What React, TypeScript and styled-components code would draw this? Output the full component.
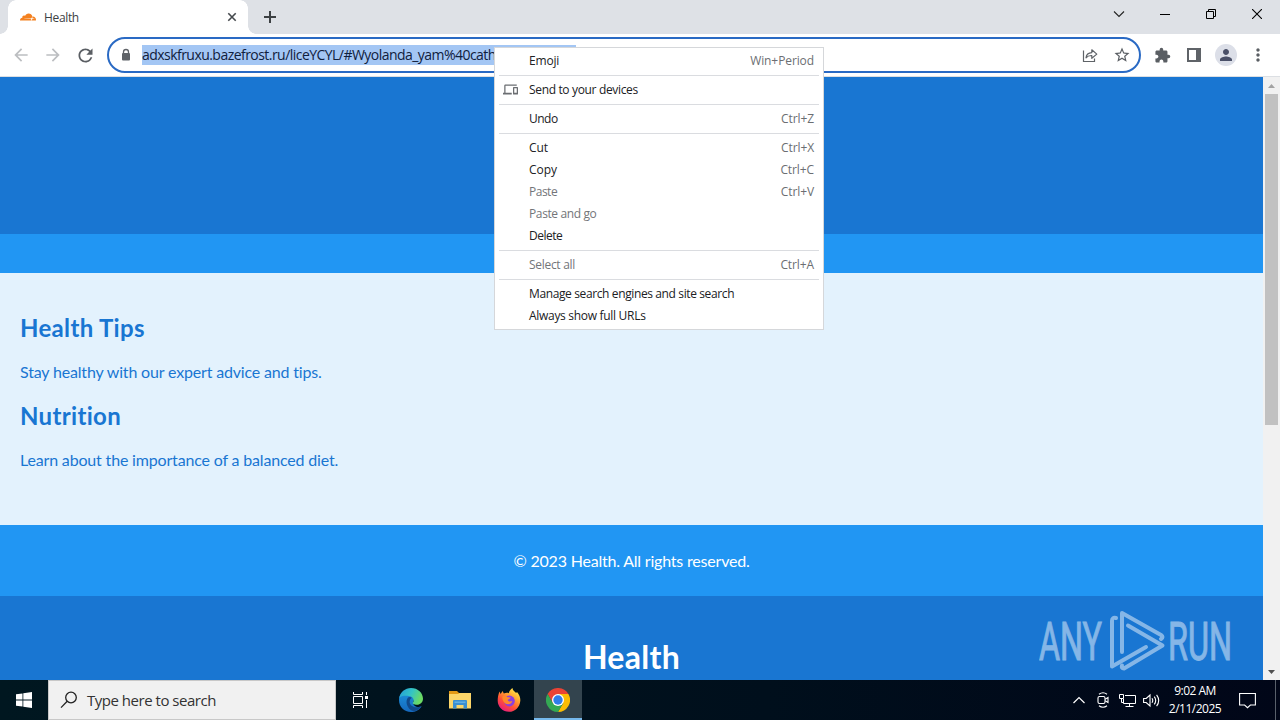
import React from "react";
import styled, { createGlobalStyle, css } from "styled-components";
import {
  MdArrowBack,
  MdArrowForward,
  MdDevices,
  MdExtension,
  MdLock,
  MdMoreVert,
  MdPerson,
  MdRefresh,
  MdStarBorder,
} from "react-icons/md";
import { SiCloudflare } from "react-icons/si";

const GlobalStyle = createGlobalStyle`
  * {
    box-sizing: border-box;
  }

  body {
    margin: 0;
    overflow: hidden;
    font-family: "Open Sans", "Noto Sans", sans-serif;
  }

  svg {
    display: block;
    flex: none;
  }
`;

type MenuEntry = {
  label: string;
  keys?: string;
  disabled?: boolean;
  icon?: React.ReactNode;
  spacing: number;
};

const menuGroups: MenuEntry[][] = [
  [{ label: "Emoji", keys: "Win+Period", spacing: -0.2 }],
  [{ label: "Send to your devices", icon: <MdDevices size={15} />, spacing: -0.34 }],
  [{ label: "Undo", keys: "Ctrl+Z", spacing: -0.5 }],
  [
    { label: "Cut", keys: "Ctrl+X", spacing: -0.1 },
    { label: "Copy", keys: "Ctrl+C", spacing: 0 },
    { label: "Paste", keys: "Ctrl+V", disabled: true, spacing: -0.5 },
    { label: "Paste and go", disabled: true, spacing: -0.38 },
    { label: "Delete", spacing: -0.5 },
  ],
  [{ label: "Select all", keys: "Ctrl+A", disabled: true, spacing: -0.3 }],
  [
    { label: "Manage search engines and site search", spacing: -0.38 },
    { label: "Always show full URLs", spacing: -0.3 },
  ],
];

const ContextMenu = () => (
  <Menu>
    {menuGroups.map((group, i) => (
      <MenuGroup key={i}>
        {group.map((item) => (
          <MenuItem key={item.label} $disabled={item.disabled}>
            <MenuIcon>{item.icon}</MenuIcon>
            <MenuLabel $spacing={item.spacing}>{item.label}</MenuLabel>
            {item.keys && <Shortcut>{item.keys}</Shortcut>}
          </MenuItem>
        ))}
      </MenuGroup>
    ))}
  </Menu>
);

const TabStrip = () => (
  <Strip>
    <Tab>
      <SiCloudflare size={16} color="#f48120" />
      <TabTitle>Health</TabTitle>
      <svg width="16" height="16" viewBox="0 0 16 16" stroke="#45494d" strokeWidth="1.6">
        <path d="M4.3 4.3l7.4 7.4M11.7 4.3l-7.4 7.4" />
      </svg>
    </Tab>
    <NewTab>
      <svg width="14" height="14" viewBox="0 0 14 14" stroke="#3c4043" strokeWidth="2">
        <path d="M7 1v12M1 7h12" />
      </svg>
    </NewTab>
    <WindowButtons>
      <WindowButton>
        <svg width="12" height="12" viewBox="0 0 12 12" fill="none" stroke="#222" strokeWidth="1.1">
          <path d="M1 3.5l5 5 5-5" />
        </svg>
      </WindowButton>
      <WindowButton>
        <svg width="10" height="10" viewBox="0 0 10 10" stroke="#000">
          <path d="M0 5.5h10" />
        </svg>
      </WindowButton>
      <WindowButton>
        <svg width="10" height="10" viewBox="0 0 10 10" fill="none" stroke="#000">
          <path d="M.5 2.5h7v7h-7zM2.5 2.5v-2h7v7h-2" />
        </svg>
      </WindowButton>
      <WindowButton>
        <svg width="10" height="10" viewBox="0 0 10 10" stroke="#000" strokeWidth="1.1">
          <path d="M0 0l10 10M10 0L0 10" />
        </svg>
      </WindowButton>
    </WindowButtons>
  </Strip>
);

const Toolbar = () => (
  <Bar>
    <ToolButton $muted>
      <MdArrowBack size={20} />
    </ToolButton>
    <ToolButton $muted>
      <MdArrowForward size={20} />
    </ToolButton>
    <ToolButton>
      <MdRefresh size={21} />
    </ToolButton>
    <Omnibox>
      <svg width="14" height="14" viewBox="0 0 14 14">
        <path d="M4.500 5.500V4a2.500 2.500 0 0 1 5 0v1.500" fill="none" stroke="#5f6368" strokeWidth="1.300" />
        <rect x="3" y="5" width="8" height="7.500" rx="1" fill="#5f6368" />
      </svg>
      <Selection>
        <Url>adxskfruxu.bazefrost.ru/liceYCYL/#Wyolanda_yam%40cath</Url>
      </Selection>
      <OmniActions>
        <ToolButton>
          <svg width="16" height="16" viewBox="0 0 16 16" fill="none" stroke="#5f6368" strokeWidth="1.2">
            <path d="M1.500 3.500v11h11v-3" />
            <path d="M4 10.800c.4-3.500 2.400-5 5.800-5.200V2.800l5 4.300-5 4.200V8.500C7.200 8.400 5.400 9 4 10.800z" strokeLinejoin="round" />
          </svg>
        </ToolButton>
        <ToolButton>
          <MdStarBorder size={18} />
        </ToolButton>
      </OmniActions>
    </Omnibox>
    <ToolButton>
      <MdExtension size={17} />
    </ToolButton>
    <ToolButton>
      <svg width="14" height="14" viewBox="0 0 14 14">
        <path fill="#5f6368" fillRule="evenodd" d="M0 0h14v14H0zM2 2v10h7V2z" />
      </svg>
    </ToolButton>
    <ToolButton>
      <Avatar>
        <MdPerson size={18} />
      </Avatar>
    </ToolButton>
    <ToolButton>
      <MdMoreVert size={20} />
    </ToolButton>
  </Bar>
);

const Watermark = () => (
  <WatermarkBox>
    <svg width="204" height="64" viewBox="0 0 204 64">
      <g fill="#fff" stroke="#fff" strokeWidth="1" fontFamily="Roboto, sans-serif" fontSize="53">
        <text x="0" y="51" textLength="63" lengthAdjust="spacingAndGlyphs">
          ANY
        </text>
        <text x="129" y="51" textLength="64" lengthAdjust="spacingAndGlyphs">
          RUN
        </text>
      </g>
      <g fill="none" stroke="#fff" strokeWidth="4" strokeLinecap="round" strokeLinejoin="round">
        <path d="M83 43V4L122 26q3 2 0 4" />
        <path d="M77 9q-4-1-4 3v45.500L107 38" />
        <path d="M89 16.500l34.500 20L85 59.500q-3 0-2-3" />
      </g>
    </svg>
  </WatermarkBox>
);

const WebPage = () => (
  <Viewport>
    <Page>
      <Hero />
      <NavBand />
      <Main>
        <h2>Health Tips</h2>
        <p>Stay healthy with our expert advice and tips.</p>
        <h2>Nutrition</h2>
        <p>Learn about the importance of a balanced diet.</p>
      </Main>
      <Footer>© 2023 Health. All rights reserved.</Footer>
      <NextHeader>
        <h1>Health</h1>
      </NextHeader>
      <Watermark />
    </Page>
    <Scrollbar>
      <ScrollArrow>
        <svg width="7" height="4" viewBox="0 0 7 4" fill="#a3a3a3">
          <path d="M0 4L3.500 0 7 4z" />
        </svg>
      </ScrollArrow>
      <Thumb />
      <ScrollArrow $bottom>
        <svg width="7" height="4" viewBox="0 0 7 4" fill="#505050">
          <path d="M0 0l3.500 4L7 0z" />
        </svg>
      </ScrollArrow>
    </Scrollbar>
  </Viewport>
);

const EdgeIcon = () => (
  <svg width="24" height="24" viewBox="0 0 24 24">
    <defs>
      <linearGradient id="edgeTop" x1="0" y1="0" x2="1" y2=".35">
        <stop offset="0" stopColor="#229cda" />
        <stop offset=".55" stopColor="#34c4c5" />
        <stop offset="1" stopColor="#6bdb64" />
      </linearGradient>
      <linearGradient id="edgeLow" x1="0" y1="0" x2="0" y2="1">
        <stop offset="0" stopColor="#1c92dc" />
        <stop offset="1" stopColor="#1568bd" />
      </linearGradient>
    </defs>
    <path fill="url(#edgeLow)" d="M0 12C0 5 5 2 12 4c5 2 4 7 2 10 0 4 4 6 8.500 4.500C20.500 22 16.500 24 12 24 5 24 0 18.600 0 12z" />
    <path fill="url(#edgeTop)" d="M.2 10.200C1.200 4.200 6 0 12 0c7 0 12 5 12 10.800 0 3.600-2.800 6-6 6-3.200 0-5-1.300-3.900-2.600 1.400-1.700.6-5.900-4.300-6.300C5.600 7.600 1.500 7.800.2 10.200z" />
    <path fill="#114a8b" d="M9 9.500c-3 3.500-1.500 11.500 5.500 13.800 3.500-.5 6.500-2.500 8.200-5.100-7 3-13.700-.7-11.700-6.200.4-1.200 1-1.700 1.800-2.300C11.600 8.800 10 8.600 9 9.500z" />
  </svg>
);

const FolderIcon = () => (
  <svg width="22" height="18" viewBox="0 0 22 18">
    <path fill="#e39a16" d="M0 0h8l2 2h12v5H0z" />
    <path fill="#fcd669" d="M0 3h9l1.500-1H22v15.500H0z" />
    <path fill="#3b8fd0" d="M4 17.500V10q0-1 1-1h12q1 0 1 1v7.500h-3.500V14h-7v3.500z" />
    <path fill="#62aee2" d="M5.500 10.500h11V12h-11z" />
  </svg>
);

const FirefoxIcon = () => (
  <svg width="24" height="24" viewBox="0 0 24 24">
    <defs>
      <linearGradient id="fox" x1=".85" y1="0" x2=".2" y2="1">
        <stop offset="0" stopColor="#fff44f" />
        <stop offset=".35" stopColor="#ffa530" />
        <stop offset=".65" stopColor="#ff5036" />
        <stop offset="1" stopColor="#e31587" />
      </linearGradient>
    </defs>
    <path fill="url(#fox)" d="M2.500 3.500L3.600 6l2-3 1.200 2.600c2-1 3.700-.9 5-.4C12.200 3 13.800 1 15.500 0c0 2.500 2 3.300 3.600 5l.9-1c2.500 2.800 3.500 5.600 3.300 8.700C22.900 19 18 23.800 12 23.800 5.800 23.800.7 19 .7 12.800.700 9.500 1.300 6.200 2.500 3.500z" />
    <circle cx="12.400" cy="13" r="5.400" fill="#8a3fe0" />
    <path fill="#ff8a2a" d="M5.500 8.500c2-.8 4-.4 5.200.7l3 .2c-.2 1.600-2.700 1.300-3 2.900 1 1.500 3 1.400 4.600.7-1 3.500-4.800 4-7.300 2.200-2-1.500-3-4.300-2.500-6.700z" />
  </svg>
);

const ChromeIcon = () => (
  <svg width="24" height="24" viewBox="0 0 24 24">
    <path fill="#ea4335" d="M1.600 6A12 12 0 0 1 22.400 6H12L6.800 15z" />
    <path fill="#fbbc04" d="M22.400 6A12 12 0 0 1 12 24l5.200-9L12 6z" />
    <path fill="#34a853" d="M12 24A12 12 0 0 1 1.600 6l5.200 9H17.200z" />
    <circle cx="12" cy="12" r="6" fill="#fff" />
    <circle cx="12" cy="12" r="4.700" fill="#2f7de9" />
  </svg>
);

const Taskbar = () => (
  <Tasks>
    <StartButton>
      <svg width="16" height="16" viewBox="0 0 16 16" fill="#fff">
        <path d="M0 2.300l6.500-.9v6.200H0zM7.300 1.300L16 0v7.600H7.300zM0 8.400h6.500v6.200L0 13.700zM7.300 8.400H16V16l-8.700-1.300z" />
      </svg>
    </StartButton>
    <Search>
      <svg width="18" height="18" viewBox="0 0 18 18" fill="none" stroke="#222" strokeWidth="1.300">
        <circle cx="11" cy="6.500" r="5.300" />
        <path d="M7.200 10.300L1 16.600" />
      </svg>
      <SearchText>Type here to search</SearchText>
    </Search>
    <TaskApps>
      <TaskButton>
        <svg width="17" height="16" viewBox="0 0 17 16" fill="none" stroke="#fff">
          <path d="M1.500 0v2.500h9V0M1.500 16v-2.500h9V16M1.500 4.500h9v7h-9zM14.500 0v3M14.500 8v8" />
          <path d="M13 4h3v3h-3z" fill="#fff" stroke="none" />
        </svg>
      </TaskButton>
      <TaskButton>
        <EdgeIcon />
      </TaskButton>
      <TaskButton>
        <FolderIcon />
      </TaskButton>
      <TaskButton>
        <FirefoxIcon />
      </TaskButton>
      <TaskButton $active>
        <ChromeIcon />
      </TaskButton>
    </TaskApps>
    <Tray>
      <TrayIcon>
        <svg width="12" height="8" viewBox="0 0 12 8" fill="none" stroke="#fff" strokeWidth="1.200">
          <path d="M.5 7L6 1.500 11.500 7" />
        </svg>
      </TrayIcon>
      <TrayIcon>
        <svg width="14" height="16" viewBox="0 0 14 16" fill="none" stroke="#fff" strokeWidth="1.100">
          <rect x="2" y="4.500" width="7" height="7" rx="1.500" />
          <path d="M9.200 7.200l2.800-1.700v5l-2.800-1.700M3 2.200Q7-.8 11 2.200M3 13.800q4 3 8 0" />
        </svg>
      </TrayIcon>
      <TrayIcon>
        <svg width="17" height="15" viewBox="0 0 17 15" fill="none" stroke="#fff">
          <path d="M6 2.500h10.500v8H4.500V6M10.500 10.500v3M6.500 13.500h8M.5 1.500h4v4h-4zM2.500 5.500v4H4.500" />
        </svg>
      </TrayIcon>
      <TrayIcon>
        <svg width="17" height="15" viewBox="0 0 17 15" fill="none" stroke="#fff" strokeWidth="1.100">
          <path d="M.6 5.500h2.600L7 2v11L3.200 9.500H.6zM9 5.300q1.500 2.200 0 4.400M11.300 3.600q2.800 3.900 0 7.800M13.600 1.800q4.200 5.700 0 11.400" />
        </svg>
      </TrayIcon>
      <Clock>
        <span>9:02 AM</span>
        <span>2/11/2025</span>
      </Clock>
      <ActionCenter>
        <svg width="17" height="17" viewBox="0 0 17 17" fill="none" stroke="#fff" strokeWidth="1.100">
          <path d="M.6 1.500h15.800v11.500h-5L8.500 15.700 5.600 13h-5z" />
        </svg>
      </ActionCenter>
      <ShowDesktop />
    </Tray>
  </Tasks>
);

const App = () => {
  return (
    <Screen>
      <GlobalStyle />
      <TabStrip />
      <Toolbar />
      <WebPage />
      <Taskbar />
      <ContextMenu />
    </Screen>
  );
};

const Screen = styled.div`
  position: relative;
  display: flex;
  flex-direction: column;
  width: 1280px;
  height: 720px;
  overflow: hidden;
  background: #fff;
`;

/* browser chrome */

const Strip = styled.div`
  display: flex;
  height: 34px;
  background: #dee1e6;
`;

const Tab = styled.div`
  display: flex;
  align-items: center;
  width: 256px;
  padding: 0 16px 0 20px;
  border-radius: 16px 16px 0 0;
  /* the two bottom corners flare outwards into the strip */
  background:
    radial-gradient(circle at 0 0, transparent 7.5px, #fff 8px) 0 100% / 8px 8px no-repeat,
    radial-gradient(circle at 100% 0, transparent 7.5px, #fff 8px) 100% 100% / 8px 8px no-repeat,
    radial-gradient(circle at 8px 8px, #fff 7.5px, transparent 8px) 8px 0 / 8px 8px no-repeat,
    radial-gradient(circle at 0 8px, #fff 7.5px, transparent 8px) 240px 0 / 8px 8px no-repeat,
    linear-gradient(#fff, #fff) 8px 8px / 240px 26px no-repeat,
    linear-gradient(#fff, #fff) 16px 0 / 224px 8px no-repeat;
`;

const TabTitle = styled.span`
  flex: 1;
  margin-left: 8px;
  font-size: 12px;
  letter-spacing: -0.35px;
  color: #3c4043;
`;

const NewTab = styled.div`
  display: flex;
  align-items: center;
  margin-left: 7px;
`;

const WindowButtons = styled.div`
  display: flex;
  height: 28px;
  margin-left: auto;
`;

const WindowButton = styled.div`
  display: flex;
  align-items: center;
  justify-content: center;
  width: 46px;
`;

const Bar = styled.div`
  display: flex;
  height: 43px;
  padding: 3px 6px 3px 5px;
  border-bottom: 1px solid #dcdfe3;
  background: #fff;
`;

const ToolButton = styled.div<{ $muted?: boolean }>`
  display: flex;
  align-items: center;
  justify-content: center;
  width: 32px;
  height: 36px;
  color: ${({ $muted }) => ($muted ? "#bcbec1" : "#5a5e63")};
`;

const Omnibox = styled.div`
  display: flex;
  flex: 1;
  align-items: center;
  height: 36px;
  margin: 0 5px 0 6px;
  padding: 0 1px 0 10px;
  border: 2px solid #2a6ac4;
  border-radius: 18px;
`;

const Selection = styled.div`
  width: 434px;
  height: 20px;
  margin-left: 9px;
  overflow: hidden;
  background: #a3c6f4;
`;

const Url = styled.span`
  display: block;
  font-size: 14px;
  line-height: 20px;
  letter-spacing: -0.54px;
  white-space: nowrap;
  color: #10203c;
`;

const OmniActions = styled.div`
  display: flex;
  margin-left: auto;
`;

const Avatar = styled.div`
  display: flex;
  align-items: center;
  justify-content: center;
  width: 22px;
  height: 22px;
  border-radius: 50%;
  background: #dcdfe8;
  color: #4a5068;
`;

/* page */

const Viewport = styled.div`
  display: flex;
  height: 603px;
`;

const Page = styled.div`
  position: relative;
  width: 1263px;
  overflow: hidden;
  font-family: Lato, sans-serif;
  font-size: 16px;
`;

const Hero = styled.div`
  height: 157px;
  background: #1976d2;
`;

const NavBand = styled.div`
  height: 39px;
  background: #2196f3;
`;

const Main = styled.div`
  height: 252px;
  padding: 40px 20px;
  background: #e3f2fd;
  color: #1976d2;

  h2 {
    margin: 0 0 20px;
    font-size: 24px;
    line-height: 29px;
    letter-spacing: 0.33px;
  }

  p {
    margin: 0 0 20px;
    line-height: 19px;
    letter-spacing: -0.17px;
  }
`;

const Footer = styled.div`
  height: 71px;
  padding-top: 26px;
  background: #2196f3;
  color: #fff;
  line-height: 19px;
  letter-spacing: -0.2px;
  text-align: center;
`;

const NextHeader = styled.div`
  height: 84px;
  padding-top: 41px;
  background: #1976d2;
  color: #fff;
  text-align: center;

  h1 {
    margin: 0;
    font-size: 32px;
    line-height: 39px;
    letter-spacing: 0.3px;
  }
`;

const WatermarkBox = styled.div`
  position: absolute;
  right: 20px;
  bottom: 7px;
  opacity: 0.47;
`;

const Scrollbar = styled.div`
  display: flex;
  flex-direction: column;
  width: 17px;
  background: #f1f1f1;
`;

const ScrollArrow = styled.div<{ $bottom?: boolean }>`
  display: flex;
  align-items: center;
  justify-content: center;
  height: 17px;
  ${({ $bottom }) =>
    $bottom &&
    css`
      margin-top: auto;
    `}
`;

const Thumb = styled.div`
  height: 331px;
  margin: 0 2px;
  background: #c1c1c1;
`;

/* context menu */

const Menu = styled.div`
  position: absolute;
  left: 494px;
  top: 47px;
  width: 330px;
  padding: 2px 0;
  border: 1px solid #d5d7da;
  background: #fff;
`;

const MenuGroup = styled.div`
  & + &::before {
    content: "";
    display: block;
    height: 1px;
    margin: 3px 4px;
    background: #dadce0;
  }
`;

const MenuItem = styled.div<{ $disabled?: boolean }>`
  display: flex;
  align-items: center;
  height: 22px;
  padding: 0 9px 1px 8px;
  font-size: 12px;
  color: ${({ $disabled }) => ($disabled ? "#737579" : "#202124")};
`;

const MenuIcon = styled.span`
  width: 26px;
  color: #6b6e72;
`;

const MenuLabel = styled.span<{ $spacing: number }>`
  letter-spacing: ${({ $spacing }) => $spacing}px;
`;

const Shortcut = styled.span`
  margin-left: auto;
  letter-spacing: -0.1px;
  color: #6b6e72;
`;

/* taskbar */

const Tasks = styled.div`
  display: flex;
  height: 40px;
  background: linear-gradient(90deg, #001720, #000f1c 60%, #010618);
`;

const StartButton = styled.div`
  display: flex;
  align-items: center;
  justify-content: center;
  width: 48px;
`;

const Search = styled.div`
  display: flex;
  align-items: center;
  width: 288px;
  padding-left: 11px;
  border: 1px solid #c8c8c8;
  background: #f1f1f1;
`;

const SearchText = styled.span`
  margin-left: 9px;
  font-size: 15px;
  letter-spacing: -0.48px;
  color: #333;
`;

const TaskApps = styled.div`
  display: flex;
  gap: 1px;
`;

const TaskButton = styled.div<{ $active?: boolean }>`
  display: flex;
  align-items: center;
  justify-content: center;
  width: 48px;

  &:first-child {
    margin-right: 2px;
  }

  ${({ $active }) =>
    $active &&
    css`
      background: #33444e;
      box-shadow: inset 0 -2px #76b9ed;
    `}
`;

const Tray = styled.div`
  display: flex;
  margin-left: auto;
`;

const TrayIcon = styled.div`
  display: flex;
  align-items: center;
  justify-content: center;
  width: 24px;
`;

const Clock = styled.div`
  display: flex;
  flex-direction: column;
  align-items: center;
  justify-content: center;
  width: 64px;
  font-size: 12px;
  line-height: 18px;
  letter-spacing: -0.5px;
  color: #fff;
`;

const ActionCenter = styled.div`
  display: flex;
  align-items: center;
  justify-content: center;
  width: 40px;
`;

const ShowDesktop = styled.div`
  width: 5px;
  margin-left: 8px;
  border-left: 1px solid #59606b;
`;

export default App;
